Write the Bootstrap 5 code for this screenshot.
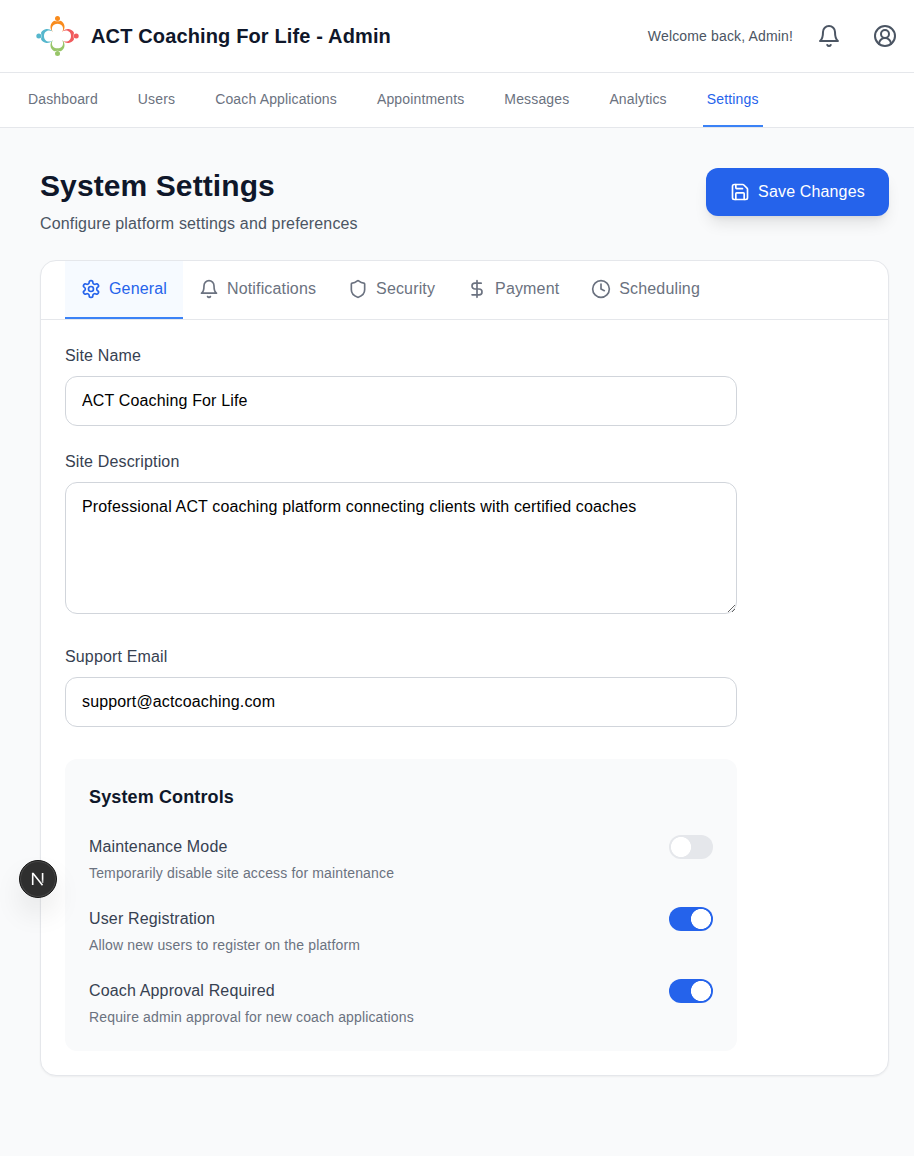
<!DOCTYPE html>
<html lang="en">
<head>
<meta charset="utf-8">
<meta name="viewport" content="width=device-width, initial-scale=1">
<title>ACT Coaching For Life - Admin</title>
<link href="https://cdn.jsdelivr.net/npm/bootstrap@5.3.0/dist/css/bootstrap.min.css" rel="stylesheet">
<style>
body{font-family:"Liberation Sans",Arial,sans-serif;font-size:16px;line-height:24px;letter-spacing:.15px;background:#f9fafb;color:#111827;min-height:1156px}
input,textarea,button{letter-spacing:inherit}
.ico{width:20px;height:20px;fill:none;stroke:currentColor;stroke-width:2;stroke-linecap:round;stroke-linejoin:round;flex:none}
.topbar{height:73px;border-bottom:1px solid #e5e7eb;padding:0 17px 0 35px}
.brand-title{font-size:20px;line-height:28px;font-weight:700;letter-spacing:.14px;color:#0f172a;margin:0 0 0 11px}
.welcome{font-size:14px;line-height:20px;color:#4b5563}
.topbar .ico{width:24px;height:24px;color:#4b5563}
.mainnav{height:55px;border-bottom:1px solid #e5e7eb;padding:0 24px;gap:32px;flex-wrap:nowrap}
.mainnav .nav-link{padding:0 4px;font-size:14px;line-height:53px;height:54px;color:#6b7280;border-bottom:2px solid transparent;white-space:nowrap}
.mainnav .nav-link.active{color:#2563eb;border-color:#3b82f6}
.page{padding:40px 25px 40px 40px}
.page h1{font-size:30px;line-height:36px;font-weight:700;letter-spacing:.1px;margin:0 0 8px;color:#0f172a}
.save{width:183px;height:48px;border-radius:12px;background:#2563eb;color:#fff;box-shadow:0 10px 15px -3px rgba(0,0,0,.1),0 4px 6px -4px rgba(0,0,0,.1);--bs-btn-hover-bg:#1d4ed8;--bs-btn-hover-color:#fff}
.panel{margin-top:24px;background:#fff;border:1px solid #e5e7eb;border-radius:16px;box-shadow:0 1px 2px rgba(0,0,0,.05);overflow:hidden}
.tabs{padding:0 24px;border-bottom:1px solid #e5e7eb;flex-wrap:nowrap}
.tabs .nav-link{display:flex;align-items:center;gap:8px;height:58px;padding:0 16px;color:#6b7280;border-bottom:2px solid transparent}
.tabs .nav-link.active{color:#2563eb;background:#f6faff;border-color:#3b82f6}
.fields{width:672px;margin:24px}
.fields .form-label{display:block;margin:0 0 8px;color:#374151;line-height:24px}
.fields .form-control{height:50px;border:1px solid #d1d5db;border-radius:12px;padding:12px 16px;color:#000;line-height:24px;font-size:16px;background:#fff}
.fields textarea.form-control{height:132px;resize:vertical}
.controls{background:#f9fafb;border-radius:12px;padding:24px;margin-top:32px}
.controls h2{font-size:18px;line-height:28px;font-weight:700;letter-spacing:.13px;margin:0 0 24px;color:#0f172a}
.ctl-name{color:#374151;line-height:24px;margin-bottom:4px}
.ctl-note{color:#6b7280;font-size:14px;line-height:20px}
.controls .form-switch{padding:0;margin:0;min-height:24px}
.controls .form-check-input{display:block;float:none;width:44px;height:24px;margin:0;border:0;border-radius:12px;background-color:#e5e7eb;background-image:radial-gradient(circle at 12px 12px,#fff 9.7px,transparent 10.3px);background-size:24px 24px;background-position:0 0}
.controls .form-check-input:checked{background-color:#2563eb;background-image:radial-gradient(circle at 12px 12px,#fff 9.7px,transparent 10.3px);background-position:20px 0}
.devbadge{position:fixed;left:19px;top:860px;width:38px;height:38px;border-radius:50%;background:#2f2f2f;border:1px solid #151515;box-shadow:inset 0 0 0 1px #484848,0 16px 32px -8px rgba(0,0,0,.24)}
</style>
</head>
<body>
<header class="bg-white">
  <div class="topbar d-flex align-items-center">
    <svg width="45" height="44" viewBox="-22.5 -22 45 44" aria-hidden="true">
      <defs><g id="person"><circle cx="0" cy="-17.500" r="2.500"/><path d="M-4.700-3.900A7 7 0 0 1-3.300-15.300Q0-14.200 3.300-15.300A7 7 0 0 1 4.700-3.900C7-8.500 4.500-12.300 0-12.300C-4.500-12.300-7-8.500-4.700-3.900Z"/></g></defs>
      <use href="#person" fill="#f98b1c"/>
      <use href="#person" fill="#f15b5d" transform="translate(1.200) rotate(90)"/>
      <use href="#person" fill="#98c569" transform="rotate(180)"/>
      <use href="#person" fill="#56b7cd" transform="translate(-1.200) rotate(-90)"/>
    </svg>
    <div class="brand-title">ACT Coaching For Life - Admin</div>
    <div class="welcome ms-auto">Welcome back, Admin!</div>
    <svg class="ico" style="margin-left:24px" viewBox="0 0 24 24"><path d="M6 8a6 6 0 0 1 12 0c0 7 3 9 3 9H3s3-2 3-9M10.300 21a1.940 1.940 0 0 0 3.400 0"/></svg>
    <svg class="ico" style="margin-left:32px" viewBox="0 0 24 24"><circle cx="12" cy="12" r="10"/><circle cx="12" cy="10" r="4"/><path d="M18 20a6 6 0 0 0-12 0"/></svg>
  </div>
  <nav class="mainnav nav">
    <a class="nav-link" href="#">Dashboard</a>
    <a class="nav-link" href="#">Users</a>
    <a class="nav-link" href="#">Coach Applications</a>
    <a class="nav-link" href="#">Appointments</a>
    <a class="nav-link" href="#">Messages</a>
    <a class="nav-link" href="#">Analytics</a>
    <a class="nav-link active" href="#">Settings</a>
  </nav>
</header>
<main class="page">
  <div class="d-flex justify-content-between align-items-start">
    <div>
      <h1>System Settings</h1>
      <p class="mb-0" style="color:#4b5563">Configure platform settings and preferences</p>
    </div>
    <button class="save btn border-0 p-0 d-flex align-items-center justify-content-center gap-2" type="button">
      <svg class="ico" viewBox="0 0 24 24"><path d="M15.200 3a2 2 0 0 1 1.400.6l3.800 3.800a2 2 0 0 1 .6 1.400V19a2 2 0 0 1-2 2H5a2 2 0 0 1-2-2V5a2 2 0 0 1 2-2z"/><path d="M17 21v-7a1 1 0 0 0-1-1H8a1 1 0 0 0-1 1v7M7 3v4a1 1 0 0 0 1 1h7"/></svg>
      <span>Save Changes</span>
    </button>
  </div>
  <section class="panel">
    <nav class="tabs nav">
      <a class="nav-link active" href="#"><svg class="ico" viewBox="0 0 24 24"><path d="M12.220 2h-.44a2 2 0 0 0-2 2v.18a2 2 0 0 1-1 1.730l-.43.25a2 2 0 0 1-2 0l-.15-.08a2 2 0 0 0-2.730.73l-.22.38a2 2 0 0 0 .73 2.730l.15.1a2 2 0 0 1 1 1.720v.51a2 2 0 0 1-1 1.740l-.15.09a2 2 0 0 0-.73 2.730l.22.38a2 2 0 0 0 2.730.73l.15-.08a2 2 0 0 1 2 0l.43.25a2 2 0 0 1 1 1.730V20a2 2 0 0 0 2 2h.44a2 2 0 0 0 2-2v-.18a2 2 0 0 1 1-1.730l.43-.25a2 2 0 0 1 2 0l.15.08a2 2 0 0 0 2.730-.73l.22-.39a2 2 0 0 0-.73-2.730l-.15-.08a2 2 0 0 1-1-1.740v-.5a2 2 0 0 1 1-1.740l.15-.09a2 2 0 0 0 .73-2.730l-.22-.38a2 2 0 0 0-2.730-.73l-.15.08a2 2 0 0 1-2 0l-.43-.25a2 2 0 0 1-1-1.730V4a2 2 0 0 0-2-2z"/><circle cx="12" cy="12" r="3"/></svg><span>General</span></a>
      <a class="nav-link" href="#"><svg class="ico" viewBox="0 0 24 24"><path d="M6 8a6 6 0 0 1 12 0c0 7 3 9 3 9H3s3-2 3-9M10.300 21a1.940 1.940 0 0 0 3.400 0"/></svg><span>Notifications</span></a>
      <a class="nav-link" href="#"><svg class="ico" viewBox="0 0 24 24"><path d="M20 13c0 5-3.500 7.500-7.660 8.950a1 1 0 0 1-.67-.01C7.500 20.500 4 18 4 13V6a1 1 0 0 1 1-1c2 0 4.500-1.200 6.240-2.720a1.170 1.170 0 0 1 1.520 0C14.510 3.810 17 5 19 5a1 1 0 0 1 1 1z"/></svg><span>Security</span></a>
      <a class="nav-link" href="#"><svg class="ico" viewBox="0 0 24 24"><path d="M12 2v20M17 5H9.500a3.500 3.500 0 0 0 0 7h5a3.500 3.500 0 0 1 0 7H6"/></svg><span>Payment</span></a>
      <a class="nav-link" href="#"><svg class="ico" viewBox="0 0 24 24"><circle cx="12" cy="12" r="10"/><path d="M12 6v6l4 2"/></svg><span>Scheduling</span></a>
    </nav>
    <form class="fields">
      <label class="form-label" for="site">Site Name</label>
      <input class="form-control" id="site" type="text" value="ACT Coaching For Life">
      <label class="form-label mt-4" for="desc">Site Description</label>
      <textarea class="form-control" id="desc">Professional ACT coaching platform connecting clients with certified coaches</textarea>
      <label class="form-label" for="mail" style="margin-top:31px">Support Email</label>
      <input class="form-control" id="mail" type="text" value="support@actcoaching.com">
      <div class="controls">
        <h2>System Controls</h2>
        <div class="d-flex flex-column gap-4">
          <div class="d-flex justify-content-between align-items-start">
            <div><div class="ctl-name">Maintenance Mode</div><div class="ctl-note">Temporarily disable site access for maintenance</div></div>
            <div class="form-check form-switch"><input class="form-check-input" type="checkbox" role="switch" aria-label="Maintenance Mode"></div>
          </div>
          <div class="d-flex justify-content-between align-items-start">
            <div><div class="ctl-name">User Registration</div><div class="ctl-note">Allow new users to register on the platform</div></div>
            <div class="form-check form-switch"><input class="form-check-input" type="checkbox" role="switch" aria-label="User Registration" checked></div>
          </div>
          <div class="d-flex justify-content-between align-items-start">
            <div><div class="ctl-name">Coach Approval Required</div><div class="ctl-note">Require admin approval for new coach applications</div></div>
            <div class="form-check form-switch"><input class="form-check-input" type="checkbox" role="switch" aria-label="Coach Approval Required" checked></div>
          </div>
        </div>
      </div>
    </form>
  </section>
</main>
<div class="devbadge d-flex align-items-center justify-content-center">
  <svg width="14" height="14" viewBox="0 0 14 14" fill="none" stroke-width="1.600" aria-hidden="true">
    <defs><linearGradient id="fade" x1="0" y1="0" x2="0" y2="14" gradientUnits="userSpaceOnUse"><stop offset=".5" stop-color="#fff"/><stop offset="1" stop-color="#fff" stop-opacity=".2"/></linearGradient></defs>
    <path d="M1.700 13V1.600H2.200L11.500 13.200" stroke="#fff"/><path d="M11.600 1V11" stroke="url(#fade)"/>
  </svg>
</div>
<script src="https://cdn.jsdelivr.net/npm/bootstrap@5.3.0/dist/js/bootstrap.bundle.min.js"></script>
</body>
</html>
